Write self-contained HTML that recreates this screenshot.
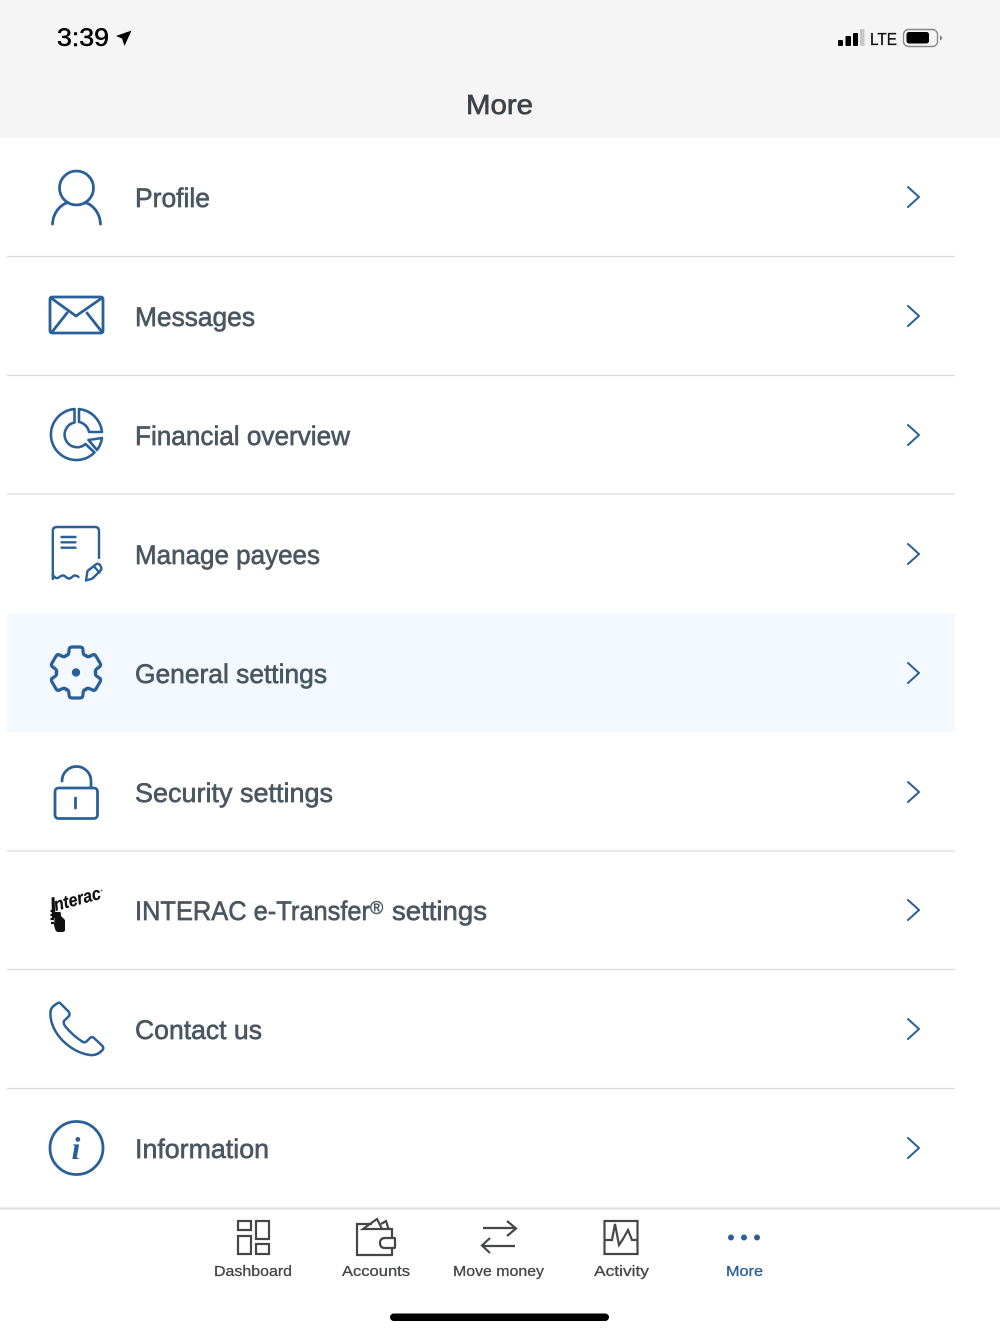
<!DOCTYPE html>
<html><head><meta charset="utf-8"><style>
html,body{margin:0;padding:0;background:#fff;width:1000px;height:1334px;overflow:hidden}
svg{display:block;filter:blur(.3px)}
text{font-family:"Liberation Sans",sans-serif}
.r{font-size:27px;fill:#4a5660;stroke:#4a5660;stroke-width:.65px}
.t{font-size:15px;fill:#444648;stroke:#444648;stroke-width:.3px}
.i{fill:none;stroke:#2a6099;stroke-width:2.8;stroke-linecap:round;stroke-linejoin:round}
.c{fill:none;stroke:#2a6099;stroke-width:2;stroke-linecap:round;stroke-linejoin:round}
.k{fill:none;stroke:#444648;stroke-width:2.200}
.s{fill:none;stroke:#dcdcdc;stroke-width:1.2}
</style></head><body>
<svg width="1000" height="1334" viewBox="0 0 1000 1334" xmlns="http://www.w3.org/2000/svg">
<rect width="1000" height="1334" fill="#fff"/>
<rect width="1000" height="137.500" fill="#f5f5f5"/>
<rect x="7" y="613" width="948" height="119" fill="#f3f9fe"/>
<path class="s" d="M7 256.500H955M7 375.500H955M7 494H955M7 851H955M7 969.500H955M7 1088.500H955"/>

<!-- status bar -->
<text x="57" y="46" font-size="25" fill="#000" stroke="#000" stroke-width=".5" textLength="52" lengthAdjust="spacingAndGlyphs">3:39</text>
<path d="M116 36L131.500 30.500L124.500 46L122 38.500Z" fill="#000"/>
<g fill="#000"><rect x="838" y="40" width="5" height="6" rx="1"/><rect x="845.500" y="36" width="5.500" height="10" rx="1"/><rect x="853" y="33" width="5" height="13" rx="1"/></g>
<rect x="860" y="29" width="4.500" height="17" fill="#c8c8c8"/>
<text x="870" y="45" font-size="17.500" fill="#111" stroke="#111" stroke-width=".3" textLength="27" lengthAdjust="spacingAndGlyphs">LTE</text>
<rect x="903.500" y="29.500" width="34" height="17" rx="5" fill="none" stroke="#8a8a8a" stroke-width="1.400"/>
<rect x="906.500" y="32" width="22.500" height="11.500" rx="2.500" fill="#000"/>
<path d="M940 35.500Q942 36.500 942 38Q942 39.500 940 40.500Z" fill="#777"/>
<text x="499.500" y="114" font-size="28" text-anchor="middle" fill="#3f4347" stroke="#3f4347" stroke-width=".7" textLength="67" lengthAdjust="spacingAndGlyphs">More</text>

<!-- row labels -->
<text class="r" x="135" y="207" textLength="75" lengthAdjust="spacingAndGlyphs">Profile</text>
<text class="r" x="135" y="326" textLength="120" lengthAdjust="spacingAndGlyphs">Messages</text>
<text class="r" x="135" y="445" textLength="215" lengthAdjust="spacingAndGlyphs">Financial overview</text>
<text class="r" x="135" y="564" textLength="185" lengthAdjust="spacingAndGlyphs">Manage payees</text>
<text class="r" x="135" y="683" textLength="192" lengthAdjust="spacingAndGlyphs">General settings</text>
<text class="r" x="135" y="802" textLength="198" lengthAdjust="spacingAndGlyphs">Security settings</text>
<text class="r" x="135" y="920" textLength="235" lengthAdjust="spacingAndGlyphs">INTERAC e-Transfer</text>
<text x="370" y="914" font-size="18" fill="#4a5660" stroke="#4a5660" stroke-width=".5">®</text>
<text class="r" x="392" y="920" textLength="95" lengthAdjust="spacingAndGlyphs">settings</text>
<text class="r" x="135" y="1039" textLength="127" lengthAdjust="spacingAndGlyphs">Contact us</text>
<text class="r" x="135" y="1158" textLength="134" lengthAdjust="spacingAndGlyphs">Information</text>

<!-- chevrons -->
<path class="c" d="M908 187L919 197L908 207M908 306L919 316L908 326M908 425L919 435L908 445M908 544L919 554L908 564M908 663L919 673L908 683M908 782L919 792L908 802M908 900L919 910L908 920M908 1019L919 1029L908 1039M908 1138L919 1148L908 1158"/>

<!-- profile -->
<g class="i"><circle cx="76.500" cy="188" r="17"/><path d="M52.500 224C53 214 59 205 68 202.500M100.500 224C100 214 94 205 85 202.500"/></g>
<!-- messages -->
<g class="i"><rect x="50" y="297" width="53" height="36" rx="2"/><path d="M51 298L76 316L102 298M52 332L67 313M102 332L87 313"/></g>
<!-- financial -->
<g class="i" style="stroke-width:2.600"><path d="M74.500 409.100A25.500 25.500 0 1 0 94.500 452.500L85.500 444A12.500 12.500 0 1 1 74.500 422.500Z"/><path d="M79 409.100A25.500 25.500 0 0 1 102 432H89A12.500 12.500 0 0 0 79 422Z"/><path d="M88.500 440L102 438A25.500 25.500 0 0 1 97 450Z"/></g>
<!-- payee -->
<g class="i" style="stroke-width:2.400"><path d="M52.800 579V531Q52.800 527 57 527H95Q99 527 99 531V558"/><path d="M53 575Q56 580 59.500 577T66 577T72 577T78.500 577"/><path d="M61.500 537H75.500M61.500 542.300H75.500M61.500 547.700H75.500"/><path d="M86 580.500L87.500 571L96.500 564Q98 563 100 565L101 567Q102 569 100.500 570.500L92.500 578.500ZM94 566.500L99.500 572.500"/></g>
<!-- gear -->
<g class="i" transform="translate(76 672.500)" style="stroke-width:3.200">
<path d="M-10 -17Q-7 -17 -7 -22Q-7 -25.500 -4 -25.500H4Q7 -25.500 7 -22Q7 -17 10 -17"/>
<g transform="rotate(60)"><path d="M-10 -17Q-7 -17 -7 -22Q-7 -25.500 -4 -25.500H4Q7 -25.500 7 -22Q7 -17 10 -17"/></g>
<g transform="rotate(120)"><path d="M-10 -17Q-7 -17 -7 -22Q-7 -25.500 -4 -25.500H4Q7 -25.500 7 -22Q7 -17 10 -17"/></g>
<g transform="rotate(180)"><path d="M-10 -17Q-7 -17 -7 -22Q-7 -25.500 -4 -25.500H4Q7 -25.500 7 -22Q7 -17 10 -17"/></g>
<g transform="rotate(240)"><path d="M-10 -17Q-7 -17 -7 -22Q-7 -25.500 -4 -25.500H4Q7 -25.500 7 -22Q7 -17 10 -17"/></g>
<g transform="rotate(300)"><path d="M-10 -17Q-7 -17 -7 -22Q-7 -25.500 -4 -25.500H4Q7 -25.500 7 -22Q7 -17 10 -17"/></g>
<circle r="4.200" fill="#2a6099" stroke="none"/></g>
<!-- lock -->
<g class="i"><rect x="55" y="788" width="42.500" height="30.500" rx="3.500"/><path d="M62 781A14.500 14.500 0 0 1 91 781V788"/><path d="M75.500 798V808"/></g>
<!-- interac -->
<g fill="#111">
<path d="M51.500 897.500L54.500 897L55.500 918H52Z"/>
<text x="0" y="0" font-size="18" font-weight="bold" font-style="italic" stroke="#111" stroke-width=".2" transform="translate(55.500 911) rotate(-15)" textLength="48" lengthAdjust="spacingAndGlyphs">nterac</text>
<path d="M55 912H60Q61 912 61 916L65 920V930Q65 932 62 932H58Q56 932 55 929L54 925Z"/>
<path d="M50.500 911H54M50.500 915H54M50.500 919H54M51 923H54" stroke="#111" stroke-width="2.200"/>
<circle cx="101.500" cy="890.500" r="1" fill="#777"/>
</g>
<!-- phone -->
<path class="i" style="stroke-width:2.500" d="M58 1003Q60 1002 61 1004L69 1012Q70 1014 69 1016L64 1021Q63 1023 65 1026Q73 1036 83 1042Q85 1043 87 1041L90 1038Q92 1036 94 1038L102.500 1046Q104 1048 102.500 1050Q97 1056 90 1055Q75 1053 62 1040Q49.500 1026 50.500 1012Q50.500 1007 58 1003Z"/>
<!-- info -->
<circle class="i" cx="76.500" cy="1148" r="26.500"/>
<text x="76" y="1159" font-size="32" font-weight="bold" font-style="italic" text-anchor="middle" fill="#2a6099" style="font-family:'Liberation Serif',serif">i</text>

<!-- tab bar -->
<rect y="1207.500" width="1000" height="2" fill="#dcdcdc"/>
<g class="k">
<rect x="238" y="1221" width="13" height="9"/><rect x="256" y="1221" width="13" height="18"/><rect x="238" y="1236" width="13" height="18"/><rect x="256" y="1244" width="13" height="10"/>
<path d="M372 1224H357V1255H392V1248M392 1238V1229H363L377 1219L382 1229M381 1224L386 1221L388.500 1229"/><path d="M394 1238H385Q380 1238 380 1243Q380 1248 385 1248H394Q395 1248 395 1247V1239Q395 1238 394 1238Z"/>
<path d="M483 1228H516M507 1221L516 1228.500L507 1236M515 1246H482M490 1238L482 1245.500L490 1253"/>
<rect x="604.500" y="1221" width="33" height="33"/><path d="M604 1240H612L615 1224L619 1245L623 1239L628 1230L632 1240H638"/>
</g>
<circle cx="731" cy="1237.500" r="3" fill="#2a6099"/><circle cx="744" cy="1237.500" r="3" fill="#2a6099"/><circle cx="757" cy="1237.500" r="3" fill="#2a6099"/>
<text class="t" x="214" y="1276" textLength="78" lengthAdjust="spacingAndGlyphs">Dashboard</text>
<text class="t" x="342" y="1276" textLength="68" lengthAdjust="spacingAndGlyphs">Accounts</text>
<text class="t" x="453" y="1276" textLength="91" lengthAdjust="spacingAndGlyphs">Move money</text>
<text class="t" x="594" y="1276" textLength="55" lengthAdjust="spacingAndGlyphs">Activity</text>
<text class="t" x="726" y="1276" textLength="37" lengthAdjust="spacingAndGlyphs" style="fill:#2a6099;stroke:#2a6099">More</text>
<rect x="390" y="1313.500" width="219" height="7.500" rx="3.750" fill="#000"/>
</svg>
</body></html>
